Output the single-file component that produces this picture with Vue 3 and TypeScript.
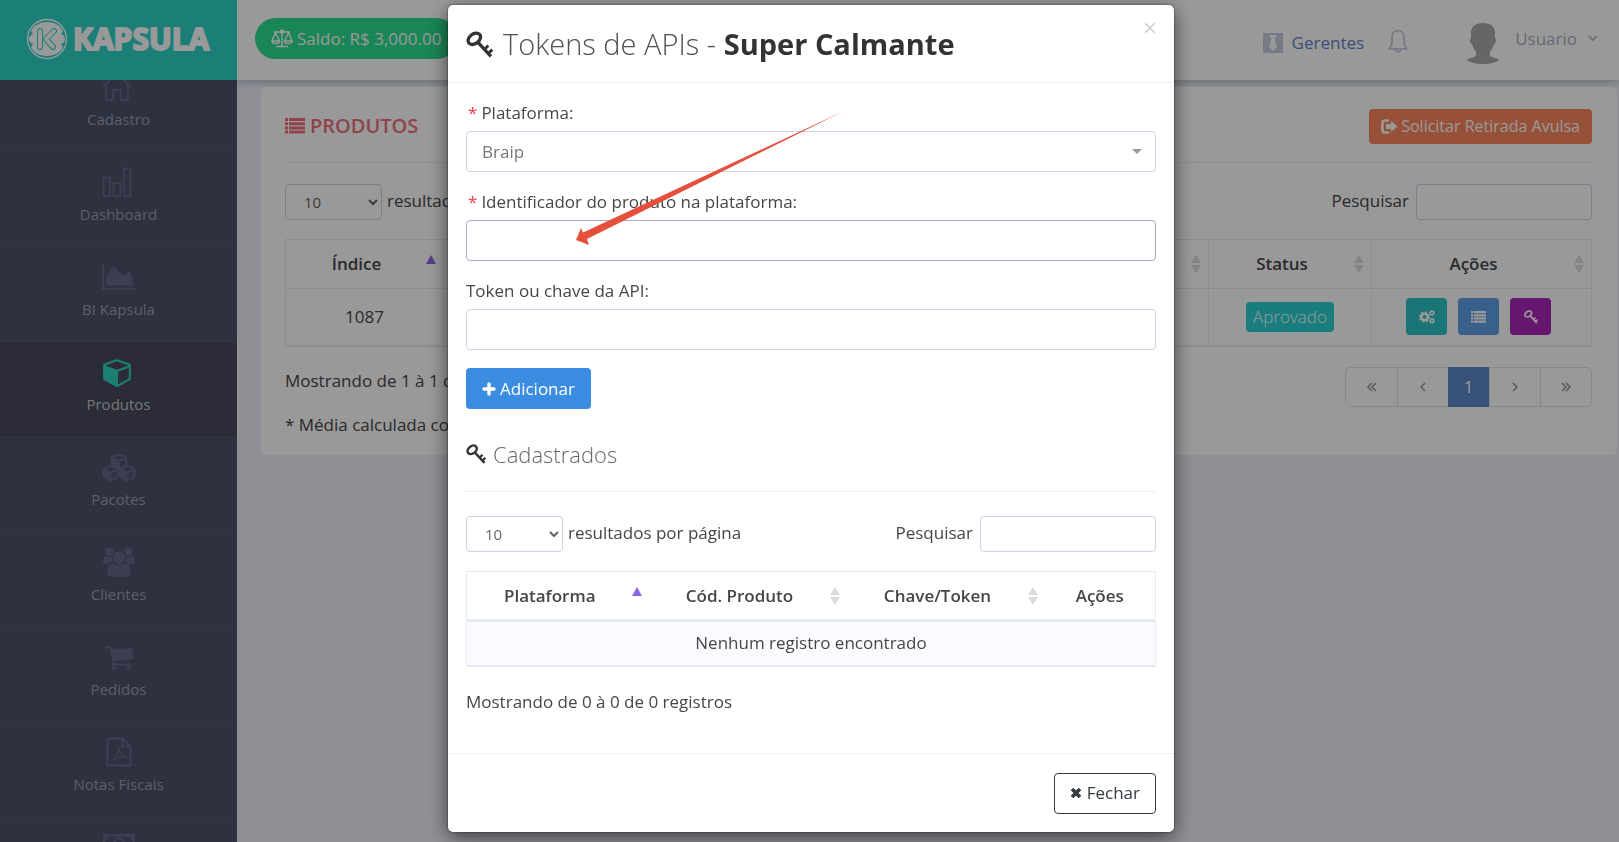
<script setup lang="ts">
import { ref } from 'vue'

interface NavItem {
  label: string
  icon: string
  active?: boolean
}

const nav: NavItem[] = [
  { label: 'Cadastro', icon: 'home' },
  { label: 'Dashboard', icon: 'bars' },
  { label: 'BI Kapsula', icon: 'area' },
  { label: 'Produtos', icon: 'cube', active: true },
  { label: 'Pacotes', icon: 'cubes' },
  { label: 'Clientes', icon: 'users' },
  { label: 'Pedidos', icon: 'cart' },
  { label: 'Notas Fiscais', icon: 'pdf' },
  { label: '', icon: 'money' },
]

const cubePath =
  'M896 1629l640-349v-636l-640 233v752zm-64-865l698-254-698-254-698 254zm832-252v768q0 35-18 65t-49 47l-704 384q-28 16-61 16t-61-16l-704-384q-31-17-49-47t-18-65v-768q0-40 23-73t61-47l704-256q22-8 44-8t44 8l704 256q38 14 61 47t23 73z'

const platform = ref('Braip')
const productId = ref('')
const token = ref('')
const pageSize = ref('10')
const modalPageSize = ref('10')
const search = ref('')
const modalSearch = ref('')
const open = ref(true)
</script>

<template>
  <div class="page">
    <svg class="defs" aria-hidden="true">
      <symbol id="key" viewBox="0 0 26 26">
        <g fill="none" stroke="currentColor">
          <ellipse cx="8" cy="7.5" rx="6.6" ry="4.7" transform="rotate(-38 8 7.5)" stroke-width="3.2" />
          <path d="M11.5 11L24 24.5" stroke-width="3.2" />
          <path d="M17.5 18l4-4M21.5 21.5l3.8-3.6" stroke-width="2.8" />
        </g>
      </symbol>
      <symbol id="list" viewBox="0 0 20 16">
        <path fill="currentColor" d="M0 0h3v3H0zM4 0h16v3H4zM0 4.2h3v3H0zM4 4.2h16v3H4zM0 8.4h3v3H0zM4 8.4h16v3H4zM0 12.6h3v3H0zM4 12.6h16v3H4z" />
      </symbol>
      <symbol id="sort" viewBox="0 0 10 18">
        <path fill="currentColor" d="M5 0l5 8H0zM5 18l5-8H0z" />
      </symbol>
      <symbol id="sort-asc" viewBox="0 0 10 18">
        <path fill="currentColor" d="M5 0l5 9H0z" />
      </symbol>
    </svg>

    <aside class="sidebar">
      <a class="brand" href="#" aria-label="Kapsula">
        <svg width="190" height="44" viewBox="0 0 190 44">
          <circle cx="21" cy="22" r="19.5" fill="none" stroke="#fff" stroke-width="1.3" />
          <path fill="#fff" d="M21 5c8 0 14 4 16 9l-2 3c3 1 4 3 4 5s-1 4-4 5l2 3c-2 5-8 9-16 9S7 35 5 30l2-3c-3-1-4-3-4-5s1-4 4-5l-2-3c2-5 8-9 16-9z" />
          <path d="M14 14v16M28 14l-8 8 7 8" fill="none" stroke="#2dd4c8" stroke-width="6" stroke-linecap="round" stroke-linejoin="round" />
          <path d="M14 14v16M28 14l-8 8 7 8" fill="none" stroke="#fff" stroke-width="4" stroke-linecap="round" stroke-linejoin="round" />
          <text class="brand-name" x="47" y="33">KAPSULA</text>
        </svg>
      </a>
      <nav class="nav">
        <a v-for="item in nav" :key="item.icon" href="#" class="nav-item" :class="{ active: item.active }">
          <svg v-if="item.icon === 'home'" class="nav-icon line" viewBox="0 0 30 30">
            <path d="M1 15L15 1l14 14M4 13v15h7V18h8v10h7V13" fill="none" stroke="currentColor" stroke-width="1.8" />
          </svg>
          <svg v-else-if="item.icon === 'bars'" class="nav-icon line" viewBox="0 0 30 30">
            <path d="M1.5 10.5h6.5v18.5H1.5zM11.5 16h7v13h-7zM22 1.5h6.5V29H22z" fill="none" stroke="currentColor" stroke-width="1.8" />
          </svg>
          <svg v-else-if="item.icon === 'area'" class="nav-icon wide" viewBox="0 0 2048 1792">
            <path fill="currentColor" d="M2048 1536v128h-2048v-1536h128v1408h1920zm-384-1024l256 896h-1664v-576l448-576 576 576z" />
          </svg>
          <svg v-else-if="item.icon === 'cube'" class="nav-icon line" viewBox="0 0 1664 1792">
            <path fill="currentColor" :d="cubePath" />
          </svg>
          <svg v-else-if="item.icon === 'cubes'" class="nav-icon wide" viewBox="0 0 3600 3000">
            <g fill="currentColor" stroke="currentColor" stroke-width="90">
              <path :d="cubePath" transform="translate(970 0)" />
              <path :d="cubePath" transform="translate(90 1220)" />
              <path :d="cubePath" transform="translate(1830 1220)" />
            </g>
          </svg>
          <svg v-else-if="item.icon === 'users'" class="nav-icon wide" viewBox="0 0 2048 1792">
            <path fill="currentColor" d="M657 896q-162 5-265 128h-134q-82 0-138-40.500t-56-118.500q0-353 124-353 6 0 43.500 21t97.500 42.500 119 21.500q67 0 133-23-5 37-5 66 0 139 81 256zm1071 637q0 120-73 189.500t-194 69.500h-874q-121 0-194-69.500t-73-189.500q0-53 3.500-103.500t14-109 26.500-108.500 43-97.500 62-81 85.500-53.500 111.500-20q10 0 43 21.500t73 48 107 48 135 21.500 135-21.500 107-48 73-48 43-21.500q61 0 111.500 20t85.500 53.500 62 81 43 97.500 26.500 108.500 14 109 3.500 103.500zm-1024-1277q0 106-75 181t-181 75-181-75-75-181 75-181 181-75 181 75 75 181zm704 384q0 159-112.500 271.500t-271.500 112.500-271.500-112.500-112.500-271.500 112.500-271.500 271.500-112.500 271.500 112.500 112.500 271.500zm576 225q0 78-56 118.500t-138 40.500h-134q-103-123-265-128 81-117 81-256 0-29-5-66 66 23 133 23 59 0 119-21.500t97.500-42.500 43.500-21q124 0 124 353zm-128-609q0 106-75 181t-181 75-181-75-75-181 75-181 181-75 181 75 75 181z" />
          </svg>
          <svg v-else-if="item.icon === 'cart'" class="nav-icon" viewBox="0 0 1792 1792">
            <path fill="currentColor" d="M704 1536q0 52-38 90t-90 38-90-38-38-90 38-90 90-38 90 38 38 90zm896 0q0 52-38 90t-90 38-90-38-38-90 38-90 90-38 90 38 38 90zm128-1088v512q0 24-16.500 42.500t-40.500 21.500l-1044 122q13 60 13 70 0 16-24 64h920q26 0 45 19t19 45-19 45-45 19h-1024q-26 0-45-19t-19-45q0-11 8-31.500t16-36 21.500-40 15.500-29.500l-177-823h-204q-26 0-45-19t-19-45 19-45 45-19h256q16 0 28.500 6.500t19.500 15.500 13 24.500 8 26 5.500 29.500 4.500 26h1201q26 0 45 19t19 45z" />
          </svg>
          <svg v-else-if="item.icon === 'pdf'" class="nav-icon" viewBox="0 0 30 30">
            <g fill="none" stroke="currentColor">
              <path d="M3.500 1.500h15l8 8v19h-23zM18.500 1.500v8h8" stroke-width="2" stroke-linejoin="round" />
              <path d="M7 25c4-2 8-9 8-15 0 6 3 10 8.500 10.500-5-1.500-9 0-13 1.500" stroke-width="1.2" />
            </g>
          </svg>
          <svg v-else class="nav-icon wide" viewBox="0 0 32 30">
            <path d="M0 2h32v22H0zM5 4.500Q5 8 2.500 8v10Q5 18 5 21.500h22q0-3.500 2.500-3.500V8Q27 8 27 4.500z" fill="currentColor" fill-rule="evenodd" />
            <ellipse cx="16" cy="13" rx="5" ry="7" fill="none" stroke="currentColor" stroke-width="2" />
          </svg>
          <span>{{ item.label }}</span>
        </a>
      </nav>
    </aside>

    <div class="content">
      <header class="topbar">
        <button class="saldo" type="button">
          <svg width="22" height="20" viewBox="0 0 22 20">
            <g fill="none" stroke="currentColor" stroke-width="1.4">
              <path d="M3 3h16M11 3v14M5 17.5h12M4.500 3.500L1 12h7.500zM17.500 3.500L13.500 12H21z" />
              <path d="M1 12q0 2.500 3.700 2.500T8.500 12M13.500 12q0 2.500 3.700 2.500T21 12" />
              <circle cx="11" cy="2.500" r="1.5" fill="currentColor" />
            </g>
          </svg>
          Saldo: R$ 3,000.00
        </button>
        <div class="user-area">
          <a class="managers" href="#">
            <svg width="20" height="20" viewBox="0 0 20 20">
              <path fill="#c5cbde" d="M0 0h20v20H0z" />
              <path fill="#fff" d="M6 2h8l-2.500 4L14 14l-4 4-4-4 2.500-8z" />
            </svg>
            Gerentes
          </a>
          <button class="bell" type="button" aria-label="Notificações">
            <svg width="20" height="24" viewBox="0 0 20 24">
              <path d="M1 20h18q-3-3-3-7V8q0-6-6-6.500Q4 2 4 8v5q0 4-3 7zM7 20.500q1 2.500 3 2.500t3-2.500" fill="none" stroke="currentColor" stroke-width="1.5" stroke-linejoin="round" />
            </svg>
          </button>
          <button class="user" type="button">
            <svg width="32" height="41" viewBox="0 0 32 41">
              <path fill="#aaa" d="M16 0c8 0 12 4 12 10v5c2 1 1 6-1 6-1 4-3 6-4 8v4c3 2 7 2 9 4-3 2.500-9 4-16 4S3 39.500 0 37c2-2 6-2 9-4v-4c-1-2-3-4-4-8-2 0-3-5-1-6v-5C4 4 8 0 16 0z" />
            </svg>
            <span>Usuario</span>
            <svg width="10" height="7" viewBox="0 0 10 7">
              <path d="M1 1l4 4 4-4" fill="none" stroke="currentColor" stroke-width="1.6" />
            </svg>
          </button>
        </div>
      </header>

      <main class="main">
        <section class="card">
          <div class="card-head">
            <h1><svg width="20" height="16"><use href="#list" /></svg>PRODUTOS</h1>
            <button class="withdraw" type="button">
              <svg width="17" height="15" viewBox="0 0 17 15">
                <path d="M7 1.500H4Q1.500 1.500 1.500 4v7q0 2.500 2.500 2.500h3" fill="none" stroke="currentColor" stroke-width="2.6" stroke-linecap="round" />
                <path d="M5 5h5V2l6.500 5.500L10 13v-3H5z" fill="currentColor" />
              </svg>
              Solicitar Retirada Avulsa
            </button>
          </div>
          <div class="filters">
            <label class="length"><select v-model="pageSize"><option>10</option><option>25</option></select><span>resultados por página</span></label>
            <label class="search"><span>Pesquisar</span><input v-model="search" type="search" /></label>
          </div>
          <table class="grid products">
            <colgroup><col class="c-index" /><col /><col class="c-status" /><col class="c-actions" /></colgroup>
            <thead>
              <tr>
                <th>Índice<svg class="sort asc"><use href="#sort-asc" /></svg></th>
                <th><svg class="sort"><use href="#sort" /></svg></th>
                <th>Status<svg class="sort"><use href="#sort" /></svg></th>
                <th>Ações<svg class="sort"><use href="#sort" /></svg></th>
              </tr>
            </thead>
            <tbody>
              <tr>
                <td>1087</td>
                <td></td>
                <td><span class="badge">Aprovado</span></td>
                <td>
                  <div class="actions">
                    <button class="act teal" type="button" aria-label="Configurar">
                      <svg width="16" height="16" viewBox="0 0 16 16">
                        <g fill="none" stroke="currentColor">
                          <circle cx="5.500" cy="8" r="3.2" stroke-width="2.6" />
                          <circle cx="5.500" cy="8" r="4.9" stroke-width="1.6" stroke-dasharray="1.9 1.95" />
                          <circle cx="13" cy="4" r="1.7" stroke-width="1.5" />
                          <circle cx="13" cy="4" r="2.5" stroke-width="1" stroke-dasharray="1.3 1.32" />
                          <circle cx="13" cy="12" r="1.7" stroke-width="1.5" />
                          <circle cx="13" cy="12" r="2.5" stroke-width="1" stroke-dasharray="1.3 1.32" />
                        </g>
                      </svg>
                    </button>
                    <button class="act blue" type="button" aria-label="Detalhes"><svg width="15" height="12"><use href="#list" /></svg></button>
                    <button class="act purple" type="button" aria-label="Tokens"><svg width="14" height="14"><use href="#key" /></svg></button>
                  </div>
                </td>
              </tr>
            </tbody>
          </table>
          <div class="card-foot">
            <div class="notes">
              <p>Mostrando de 1 à 1 de 1 registros</p>
              <p>* Média calculada com</p>
            </div>
            <nav class="pager" aria-label="Páginas">
              <button type="button" aria-label="Primeira"><svg width="10" height="10" viewBox="0 0 10 10"><path d="M5 1L1 5l4 4M9 1L5 5l4 4" /></svg></button>
              <button type="button" aria-label="Anterior"><svg width="10" height="10" viewBox="0 0 10 10"><path d="M7 1L3 5l4 4" /></svg></button>
              <button type="button" class="current">1</button>
              <button type="button" aria-label="Próxima"><svg width="10" height="10" viewBox="0 0 10 10"><path d="M3 1l4 4-4 4" /></svg></button>
              <button type="button" aria-label="Última"><svg width="10" height="10" viewBox="0 0 10 10"><path d="M1 1l4 4-4 4M5 1l4 4-4 4" /></svg></button>
            </nav>
          </div>
        </section>
      </main>
    </div>

    <div v-if="open" class="backdrop">
      <div class="modal" role="dialog" aria-modal="true" aria-labelledby="modal-title">
        <header class="modal-head">
          <h2 id="modal-title"><svg width="27" height="27"><use href="#key" /></svg>Tokens de APIs -&nbsp;<strong>Super Calmante</strong></h2>
          <button class="close" type="button" aria-label="Fechar janela" @click="open = false">
            <svg width="12" height="12" viewBox="0 0 12 12"><path d="M1 1l10 10M11 1L1 11" stroke="currentColor" stroke-width="1.5" /></svg>
          </button>
        </header>

        <div class="modal-body">
          <div class="field">
            <label class="required" for="platform"><span>*</span>Plataforma:</label>
            <div class="select-wrap">
              <select id="platform" v-model="platform"><option>Braip</option></select>
              <svg class="caret" width="10" height="5" viewBox="0 0 10 5"><path d="M0 0h10L5 5z" fill="#999" /></svg>
            </div>
          </div>
          <div class="field">
            <label class="required" for="product-id"><span>*</span>Identificador do produto na plataforma:</label>
            <input id="product-id" v-model="productId" class="focused" type="text" />
          </div>
          <div class="field">
            <label for="token">Token ou chave da API:</label>
            <input id="token" v-model="token" type="text" />
          </div>
          <button class="add" type="button">
            <svg width="14" height="14" viewBox="0 0 14 14"><path d="M7 2v10M2 7h10" stroke="currentColor" stroke-width="3.4" stroke-linecap="round" /></svg>
            Adicionar
          </button>
          <h3><svg width="20" height="20"><use href="#key" /></svg>Cadastrados</h3>

          <div class="filters">
            <label class="length"><select v-model="modalPageSize"><option>10</option><option>25</option></select><span>resultados por página</span></label>
            <label class="search"><span>Pesquisar</span><input v-model="modalSearch" type="search" /></label>
          </div>
          <table class="grid tokens">
            <colgroup><col class="c-platform" /><col class="c-code" /><col class="c-code" /><col /></colgroup>
            <thead>
              <tr>
                <th>Plataforma<svg class="sort asc"><use href="#sort-asc" /></svg></th>
                <th>Cód. Produto<svg class="sort"><use href="#sort" /></svg></th>
                <th>Chave/Token<svg class="sort"><use href="#sort" /></svg></th>
                <th class="plain">Ações</th>
              </tr>
            </thead>
            <tbody>
              <tr><td colspan="4">Nenhum registro encontrado</td></tr>
            </tbody>
          </table>
          <p class="summary">Mostrando de 0 à 0 de 0 registros</p>
        </div>

        <footer class="modal-foot">
          <button class="dismiss" type="button" @click="open = false">
            <svg width="12" height="12" viewBox="0 0 12 12"><path d="M2 2l8 8M10 2l-8 8" stroke="currentColor" stroke-width="3.6" /></svg>
            Fechar
          </button>
        </footer>

        <svg class="pointer" viewBox="0 0 268 136" aria-hidden="true">
          <path fill="#e5503c" d="M0 129L5 117l2 4.500L268 0 11 128l2 6z" />
        </svg>
      </div>
    </div>
  </div>
</template>

<style>
html,
body {
  overflow: hidden;
  background: #eef1fb;
}
</style>

<style scoped>
.page {
  display: flex;
  height: 100vh;
  overflow: hidden;
  background: #eef1fb;
  color: #464646;
  font: 17px/24px 'Open Sans', 'Noto Sans', sans-serif;
}
.page *,
.page {
  box-sizing: border-box;
}
.defs {
  position: absolute;
  width: 0;
  height: 0;
}
button,
input,
select {
  font: inherit;
  color: inherit;
}
button {
  cursor: pointer;
}
p,
h1,
h2,
h3 {
  margin: 0;
}

/* sidebar */
.sidebar {
  display: flex;
  flex: none;
  flex-direction: column;
  width: 237px;
  overflow: hidden;
  background: #4d526b;
}
.brand {
  z-index: 1;
  display: flex;
  flex: none;
  align-items: center;
  height: 80px;
  padding: 0 0 2px 26px;
  background: #2dd4c8;
}
.brand-name {
  font: 700 30px 'Open Sans', sans-serif;
  fill: #fff;
  stroke: #fff;
  stroke-width: 2;
  stroke-linejoin: round;
}
.nav {
  margin-top: -23px;
}
.nav-item {
  display: flex;
  flex-direction: column;
  align-items: center;
  gap: 5px;
  height: 95px;
  padding-top: 15px;
  border-bottom: 1px solid #555a73;
  color: #9ba0b0;
  font-size: 15px;
  text-decoration: none;
}
.nav-icon {
  width: 30px;
  height: 30px;
  color: #666a86;
}
.nav-icon.wide {
  width: 34px;
}
.nav-icon.line {
  margin-right: 4px;
}
.nav-item.active {
  background: #484a5c;
  color: #c5c8cc;
}
.nav-item.active .nav-icon {
  color: #2dd4c0;
}

/* top bar */
.content {
  display: flex;
  flex: 1;
  flex-direction: column;
  min-width: 0;
}
.topbar {
  display: flex;
  flex: none;
  align-items: center;
  justify-content: space-between;
  height: 80px;
  padding: 0 21px 3px 18px;
  background: #fff;
  box-shadow: 0 2px 8px rgba(60, 70, 90, 0.35);
}
.saldo {
  display: flex;
  align-items: center;
  gap: 4px;
  height: 41px;
  padding: 0 16px;
  border: 0;
  border-radius: 21px;
  background: #2cde8f;
  color: #fff;
}
.user-area {
  display: flex;
  align-items: center;
}
.managers {
  display: flex;
  align-items: center;
  gap: 9px;
  padding-top: 8px;
  color: #5d84c8;
  text-decoration: none;
}
.bell {
  display: flex;
  margin: 0 59px 0 24px;
  padding: 4px 0 0;
  border: 0;
  background: none;
  color: #bcc4d8;
}
.user {
  display: flex;
  align-items: center;
  padding: 0;
  border: 0;
  background: none;
  color: #a9b0c2;
}
.user > svg:first-child {
  margin-top: 10px;
}
.user span {
  margin: 0 11px 0 16px;
}

/* products card */
.main {
  padding: 7px 2px 0 24px;
}
.card {
  padding: 0 25px 18px 24px;
  border-radius: 5px;
  background: #fff;
}
.card-head {
  display: flex;
  align-items: center;
  justify-content: space-between;
  height: 76px;
  padding-top: 3px;
  border-bottom: 1px solid #eceef3;
}
h1 {
  display: flex;
  align-items: center;
  gap: 5px;
  color: #f0717c;
  font-size: 20px;
  font-weight: 600;
}
.withdraw {
  display: flex;
  align-items: center;
  gap: 3px;
  height: 35px;
  padding: 0 12px;
  border: 0;
  border-radius: 4px;
  background: #fd8860;
  color: #fff;
  font-size: 16px;
}
.filters {
  display: flex;
  align-items: center;
  justify-content: space-between;
}
.card .filters {
  margin: 21px 0 19px;
}
.filters label {
  display: flex;
  align-items: center;
}
.filters span {
  padding-bottom: 3px;
}
.length {
  gap: 5px;
}
.length select {
  width: 97px;
  height: 36px;
  padding: 0 3px 0 14px;
  border: 1px solid #cfd2e6;
  border-radius: 4px;
  background: #fff;
  color: #666;
  font-size: 15px;
}
.search {
  gap: 7px;
}
.search input {
  width: 176px;
  height: 36px;
  padding: 0 10px;
  border: 1px solid #cfd2e6;
  border-radius: 4px;
  background: #fff;
}
.grid {
  width: 100%;
  table-layout: fixed;
  border-collapse: collapse;
  border: 1px solid #e8ebf4;
  text-align: center;
}
.grid th {
  position: relative;
  height: 49px;
  padding: 0 24px 0 8px;
  font-weight: 600;
}
.grid th.plain {
  padding: 0 8px;
}
.grid td {
  padding: 0;
}
.sort {
  position: absolute;
  top: 15px;
  right: 7px;
  width: 10px;
  height: 18px;
  color: #dcdcdc;
}
.sort.asc {
  color: #8e67e8;
}
.products {
  border-bottom-width: 2px;
}
.products th,
.products td {
  border-right: 1px solid #e8ebf4;
  border-bottom: 1px solid #e8ebf4;
}
.products td {
  height: 57px;
}
.c-index {
  width: 158px;
}
.c-status {
  width: 163px;
}
.c-actions {
  width: 220px;
}
.badge {
  display: inline-block;
  height: 30px;
  padding: 0 7px;
  border-radius: 4px;
  background: #2bd0d2;
  color: #fff;
  font-weight: 300;
  line-height: 30px;
}
.actions {
  display: flex;
  justify-content: center;
  gap: 11px;
  padding-right: 6px;
}
.act {
  display: flex;
  align-items: center;
  justify-content: center;
  width: 41px;
  height: 37px;
  padding: 0;
  border: 0;
  border-radius: 4px;
  color: #fff;
}
.teal {
  background: #2cc4c6;
}
.blue {
  background: #5f9ee8;
}
.purple {
  background: #aa26ba;
}
.card-foot {
  display: flex;
  align-items: flex-start;
  justify-content: space-between;
  padding-top: 20px;
}
.notes {
  display: flex;
  flex-direction: column;
  gap: 20px;
  padding-top: 2px;
}
.pager {
  display: flex;
  height: 40px;
  border: 1px solid #dfe2ea;
  border-radius: 5px;
}
.pager button {
  display: flex;
  align-items: center;
  justify-content: center;
  width: 51px;
  padding: 0;
  border: 0;
  border-left: 1px solid #dfe2ea;
  background: none;
  color: #999;
}
.pager button:first-child {
  border-left: 0;
}
.pager path {
  fill: none;
  stroke: currentColor;
  stroke-width: 1.6;
}
.pager .current {
  width: 41px;
  margin: -1px 0;
  border: 0;
  background: #5c88c8;
  color: #fff;
}

/* modal */
.backdrop {
  position: fixed;
  inset: 0;
  z-index: 10;
  padding: 5px 16px 10px 19px;
  background: rgba(0, 0, 0, 0.4);
}
.modal {
  position: relative;
  max-width: 726px;
  margin: 0 auto;
  border-radius: 5px;
  background: #fff;
  box-shadow: 0 5px 20px rgba(0, 0, 0, 0.6), 0 0 2px rgba(0, 0, 0, 0.7);
}
.modal-head {
  display: flex;
  align-items: flex-start;
  justify-content: space-between;
  height: 78px;
  padding: 17px 18px 0;
  border-bottom: 1px solid #eef0f3;
}
h2 {
  display: flex;
  align-items: center;
  color: #505050;
  font-size: 29px;
  font-weight: 300;
  line-height: 44px;
}
h2 svg {
  margin-right: 10px;
}
h2 strong {
  color: #333;
  font-weight: 700;
}
.close {
  display: flex;
  padding: 0;
  border: 0;
  background: none;
  color: #ccc;
}
.modal-body {
  padding: 18px 18px 39px;
}
.field {
  display: flex;
  flex-direction: column;
  gap: 6px;
  margin-bottom: 18px;
}
.required {
  padding-left: 2px;
}
.required span {
  margin-right: 4px;
  color: #f23a4d;
}
.field input,
.field select {
  width: 100%;
  height: 41px;
  padding: 0 15px;
  border: 1px solid #cfd5e6;
  border-radius: 4px;
  outline: 0;
  background: #fff;
}
.field input.focused {
  border-color: #a6acd0;
}
.field select {
  display: block;
  appearance: none;
  color: #777;
}
.select-wrap {
  position: relative;
}
.caret {
  position: absolute;
  top: 18px;
  right: 14px;
}
.add {
  display: flex;
  align-items: center;
  gap: 4px;
  height: 41px;
  padding: 0 16px;
  border: 0;
  border-radius: 4px;
  background: #3b8de2;
  color: #fff;
}
.add svg,
.dismiss svg {
  flex: none;
}
.modal h3 {
  display: flex;
  align-items: center;
  gap: 7px;
  height: 71px;
  margin: 12px 0 24px;
  padding-bottom: 4px;
  border-bottom: 1px solid #eceef2;
  color: #666;
  font-size: 22px;
  font-weight: 300;
}
h2 svg,
h3 svg {
  flex: none;
  color: #333;
}
.tokens {
  margin-top: 19px;
  border-bottom: 2px solid #e6eaf2;
}
.tokens tbody tr {
  border-top: 3px solid #e6eaf2;
  background: #fafbfe;
}
.tokens td {
  height: 45px;
}
.c-platform {
  width: 182px;
}
.c-code {
  width: 198px;
}
.summary {
  margin-top: 23px;
}
.modal-foot {
  display: flex;
  justify-content: flex-end;
  padding: 19px 18px 18px;
  border-top: 1px solid #eceef0;
}
.dismiss {
  display: flex;
  align-items: center;
  gap: 5px;
  height: 41px;
  padding: 0 15px;
  border: 1px solid #343a40;
  border-radius: 4px;
  background: #fff;
  color: #343a40;
}
.pointer {
  position: absolute;
  top: 106px;
  left: 128px;
  width: 268px;
  height: 136px;
  pointer-events: none;
}
</style>
